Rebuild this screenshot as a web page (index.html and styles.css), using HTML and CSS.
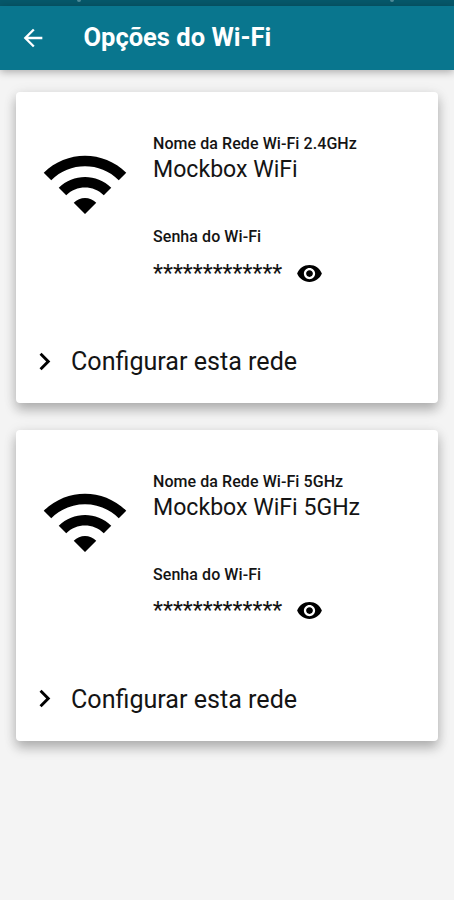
FILE: index.html
```html
<!DOCTYPE html>
<html lang="pt-BR">
<head>
<meta charset="utf-8">
<title>Opções do Wi-Fi</title>
<link rel="stylesheet" href="styles.css">
</head>
<body>
<div class="status-bar"><i class="speck"></i><i class="speck"></i></div>
<header class="app-bar">
  <svg class="back" viewBox="0 0 24 24"><path d="M20 11H7.83l5.59-5.59L12 4l-8 8 8 8 1.41-1.41L7.83 13H20v-2z"/></svg>
  <h1 class="title">Opções do Wi-Fi</h1>
</header>
<main class="networks">
  <section class="card">
    <div class="network">
      <svg class="wifi" viewBox="0 0 24 24"><path d="M1 9l2 2c4.97-4.97 13.03-4.97 18 0l2-2C16.93 2.93 7.08 2.93 1 9zm8 8l3 3 3-3c-1.65-1.66-4.34-1.66-6 0zm-4-4l2 2c2.76-2.76 7.24-2.76 10 0l2-2C15.14 9.14 8.87 9.14 5 13z"/></svg>
      <div class="details">
        <div class="label"><span>Nome da Rede Wi-Fi 2.4GHz</span></div>
        <div class="name"><span>Mockbox WiFi</span></div>
        <div class="label password-label"><span>Senha do Wi-Fi</span></div>
        <div class="password"><span class="mask">*************</span><svg class="eye" viewBox="0 0 24 24"><path d="M12 4.5C7 4.5 2.73 7.61 1 12c1.73 4.39 6 7.5 11 7.5s9.27-3.11 11-7.5c-1.73-4.39-6-7.5-11-7.5zM12 17c-2.76 0-5-2.24-5-5s2.24-5 5-5 5 2.24 5 5-2.24 5-5 5zm0-8c-1.66 0-3 1.34-3 3s1.34 3 3 3 3-1.34 3-3-1.34-3-3-3z"/></svg></div>
      </div>
    </div>
    <div class="configure"><svg class="chevron" viewBox="0 0 24 24"><path d="M10 6L8.59 7.41 13.17 12l-4.58 4.59L10 18l6-6z"/></svg><span>Configurar esta rede</span></div>
  </section>
  <section class="card">
    <div class="network">
      <svg class="wifi" viewBox="0 0 24 24"><path d="M1 9l2 2c4.97-4.97 13.03-4.97 18 0l2-2C16.93 2.93 7.08 2.93 1 9zm8 8l3 3 3-3c-1.65-1.66-4.34-1.66-6 0zm-4-4l2 2c2.76-2.76 7.24-2.76 10 0l2-2C15.14 9.14 8.87 9.14 5 13z"/></svg>
      <div class="details">
        <div class="label"><span>Nome da Rede Wi-Fi 5GHz</span></div>
        <div class="name"><span>Mockbox WiFi 5GHz</span></div>
        <div class="label password-label"><span>Senha do Wi-Fi</span></div>
        <div class="password"><span class="mask">*************</span><svg class="eye" viewBox="0 0 24 24"><path d="M12 4.5C7 4.5 2.73 7.61 1 12c1.73 4.39 6 7.5 11 7.5s9.27-3.11 11-7.5c-1.73-4.39-6-7.5-11-7.5zM12 17c-2.76 0-5-2.24-5-5s2.24-5 5-5 5 2.24 5 5-2.24 5-5 5zm0-8c-1.66 0-3 1.34-3 3s1.34 3 3 3 3-1.34 3-3-1.34-3-3-3z"/></svg></div>
      </div>
    </div>
    <div class="configure"><svg class="chevron" viewBox="0 0 24 24"><path d="M10 6L8.59 7.41 13.17 12l-4.58 4.59L10 18l6-6z"/></svg><span>Configurar esta rede</span></div>
  </section>
</main>
</body>
</html>
```
FILE: styles.css
```css
* { box-sizing: border-box; }
body {
  margin: 0;
  min-height: 900px;
  background: #f4f4f4;
  color: #141414;
  font-family: Roboto, sans-serif;
}
svg { display: block; flex: none; fill: #000; }
.status-bar {
  height: 6px;
  padding: 0 60px 0 77px;
  display: flex;
  justify-content: space-between;
  background: #06586a;
}
.speck { width: 4px; height: 2px; border-radius: 0 0 2px 2px; background: #4d8a98; }
.app-bar {
  height: 64px;
  display: flex;
  align-items: center;
  padding-left: 19px;
  background: #09768e;
  box-shadow: 0 2px 8px rgba(0, 0, 0, .3);
}
.back { width: 28px; height: 28px; fill: #fff; }
.title {
  margin: -2px 0 0 36.5px;
  font-size: 25.5px;
  font-weight: 700;
  line-height: 32px;
  color: #fff;
  white-space: nowrap;
}
.networks {
  display: flex;
  flex-direction: column;
  gap: 26.5px;
  padding: 22px 16px 0;
}
.card {
  height: 311px;
  border-radius: 4px;
  background: #fff;
  box-shadow: 0 7px 12px rgba(0, 0, 0, .24), 0 2px 14px rgba(0, 0, 0, .1);
}
.network { display: flex; height: 246px; padding: 42px 0 0 24px; }
.wifi { width: 90px; height: 90px; margin-top: 5.4px; }
.details { margin-left: 23px; white-space: nowrap; }
.label { font-size: 16px; font-weight: 500; line-height: 20px; letter-spacing: .07px; }
.name { font-size: 23.1px; line-height: 32px; }
.password-label { margin-top: 41px; }
.password { display: flex; align-items: center; height: 27px; margin-top: 12.5px; }
.mask { font-size: 23px; line-height: 27px; letter-spacing: .04px; }
.eye { width: 27px; height: 27px; margin-left: 14px; }
.configure {
  display: flex;
  align-items: center;
  height: 47px;
  padding-left: 11px;
  font-size: 25.1px;
  white-space: nowrap;
}
.chevron { width: 35px; height: 35px; margin: -1px 9px 0 0; }
```
